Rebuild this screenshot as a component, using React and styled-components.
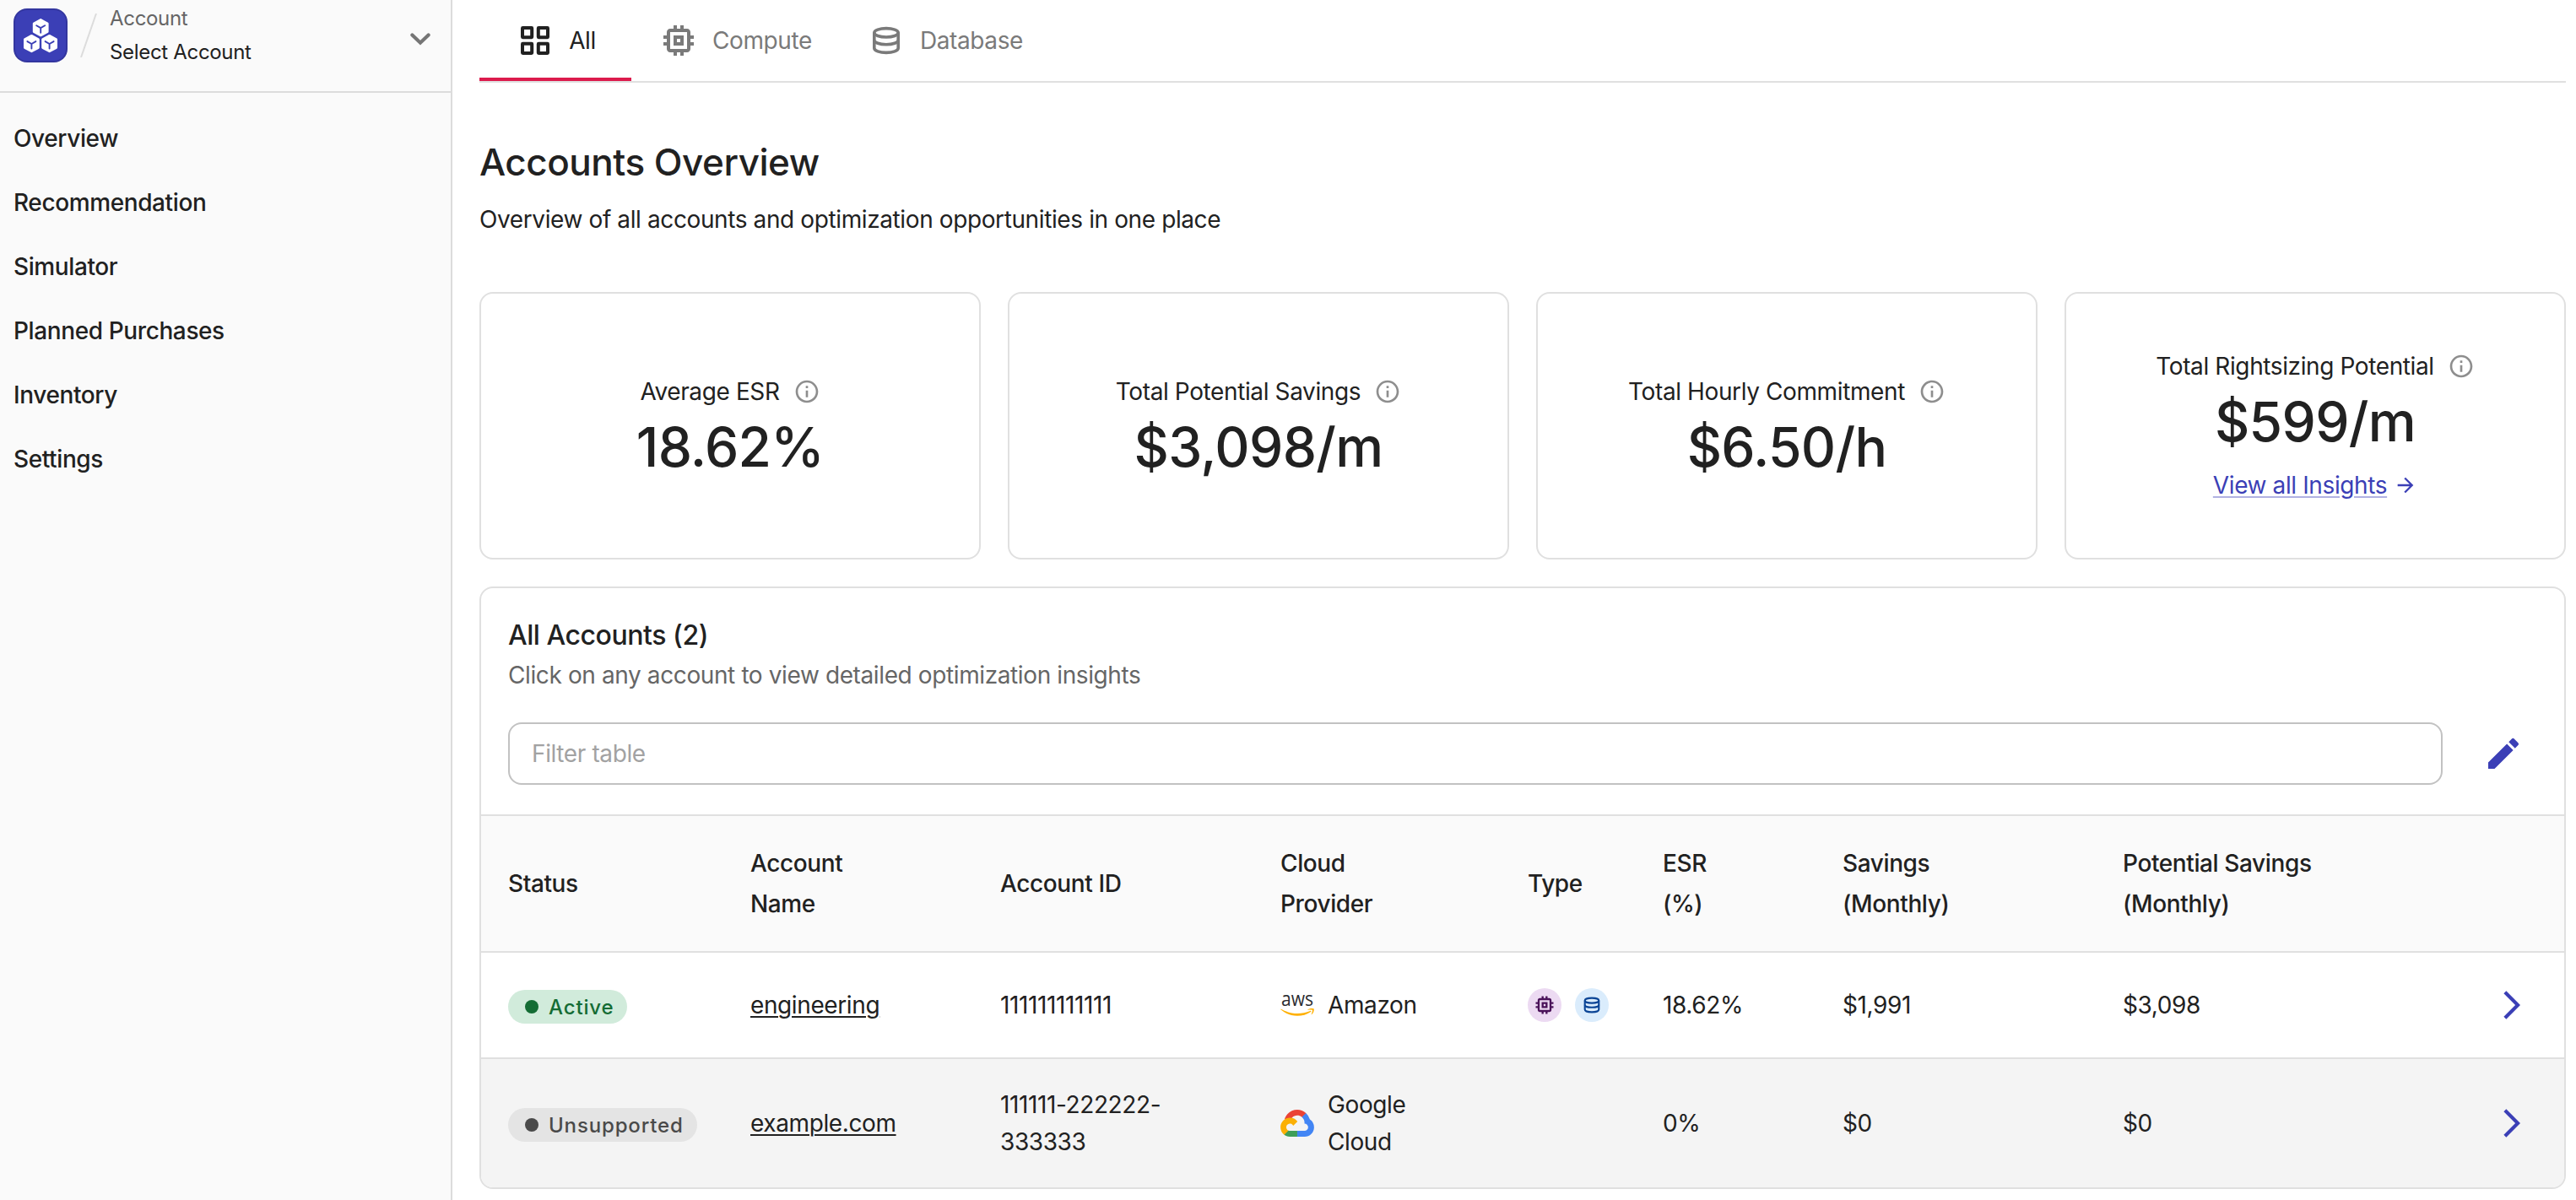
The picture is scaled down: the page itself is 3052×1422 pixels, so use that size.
import React from "react";
import styled, { createGlobalStyle } from "styled-components";

const navItems = [
  "Overview",
  "Recommendation",
  "Simulator",
  "Planned Purchases",
  "Inventory",
  "Settings",
];

const stats = [
  { label: "Average ESR", value: "18.62%" },
  { label: "Total Potential Savings", value: "$3,098/m" },
  { label: "Total Hourly Commitment", value: "$6.50/h" },
  { label: "Total Rightsizing Potential", value: "$599/m", link: "View all Insights" },
];

const headers = [
  "Status",
  "Account\nName",
  "Account ID",
  "Cloud\nProvider",
  "Type",
  "ESR\n(%)",
  "Savings\n(Monthly)",
  "Potential Savings\n(Monthly)",
];

const accounts = [
  {
    status: "Active",
    name: "engineering",
    id: "111111111111",
    provider: "Amazon",
    types: ["compute", "database"],
    esr: "18.62%",
    savings: "$1,991",
    potential: "$3,098",
  },
  {
    status: "Unsupported",
    name: "example.com",
    id: "111111-222222-\n333333",
    provider: "Google\nCloud",
    types: [],
    esr: "0%",
    savings: "$0",
    potential: "$0",
  },
];

const Icon = ({ size = 48, children }) => (
  <IconSvg $size={size} viewBox="0 0 24 24">
    {children}
  </IconSvg>
);

const GridIcon = ({ size }) => (
  <Icon size={size}>
    <g fill="none" stroke="currentColor" strokeWidth="2" strokeLinejoin="round">
      <rect x="4.5" y="4.5" width="5.6" height="5.6" rx="0.2" />
      <rect x="13.9" y="4.5" width="5.6" height="5.6" rx="0.2" />
      <rect x="4.5" y="13.9" width="5.6" height="5.6" rx="0.2" />
      <rect x="13.9" y="13.9" width="5.6" height="5.6" rx="0.2" />
    </g>
  </Icon>
);

const ComputeIcon = ({ size }) => (
  <Icon size={size}>
    <path d="M15 9H9v6h6V9zm-2 4h-2v-2h2v2zm8-2V9h-2V7c0-1.1-.9-2-2-2h-2V3h-2v2h-2V3H9v2H7c-1.1 0-2 .9-2 2v2H3v2h2v2H3v2h2v2c0 1.1.9 2 2 2h2v2h2v-2h2v2h2v-2h2c1.1 0 2-.9 2-2v-2h2v-2h-2v-2h2zm-4 6H7V7h10v10z" />
  </Icon>
);

const DatabaseIcon = ({ size }) => (
  <Icon size={size}>
    <g fill="none" stroke="currentColor" strokeWidth="1.8">
      <ellipse cx="12" cy="7.4" rx="7.1" ry="2.6" />
      <path d="M4.9 7.4v9.1c0 1.6 3.2 2.7 7.1 2.7s7.1-1.1 7.1-2.7V7.4" />
      <path d="M4.9 11.7c0 1.6 3.2 2.7 7.1 2.7s7.1-1.1 7.1-2.7" />
    </g>
  </Icon>
);

const InfoIcon = () => (
  <Icon size={32}>
    <path d="M11 7h2v2h-2zm0 4h2v6h-2zm1-9C6.48 2 2 6.48 2 12s4.48 10 10 10 10-4.48 10-10S17.52 2 12 2zm0 18c-4.41 0-8-3.59-8-8s3.59-8 8-8 8 3.59 8 8-3.59 8-8 8z" />
  </Icon>
);

const cubes = [
  [32.2, 22.6],
  [21.4, 41.5],
  [42.6, 41.5],
];

const Logo = () => (
  <LogoSvg viewBox="0 0 64 64">
    <rect width="64" height="64" rx="16" fill="#33369f" />
    <rect x="2" y="2" width="60" height="60" rx="14" fill="#3b3fb6" />
    {cubes.map(([x, y]) => (
      <g key={x} transform={`translate(${x} ${y})`}>
        <path
          d="M0-9.4 8.2-4.9V5.1L0 9.5-8.2 5.1V-4.9z"
          fill="#fff"
          stroke="#fff"
          strokeWidth="2.4"
          strokeLinejoin="round"
        />
        <path
          d="M-5-2.4 0 .5l5-2.9M0 .5v5.6"
          fill="none"
          stroke="#3b3fb6"
          strokeWidth="1.9"
          strokeLinecap="round"
        />
      </g>
    ))}
  </LogoSvg>
);

const AwsLogo = () => (
  <ProviderLogo width="40" height="50" viewBox="0 -12 40 50">
    <AwsText x="1" y="14" textLength="38" lengthAdjust="spacingAndGlyphs">
      aws
    </AwsText>
    <g transform="translate(0 2) scale(0.1317)" fill="#ffb000">
      <path d="M273.5 143.7c-32.9 24.3-80.7 37.2-121.8 37.2-57.6 0-109.5-21.3-148.7-56.7-3.1-2.8-.3-6.6 3.4-4.4 42.4 24.6 94.7 39.5 148.8 39.5 36.5 0 76.6-7.6 113.5-23.2 5.5-2.5 10.2 3.6 4.8 7.6z" />
      <path d="M287.2 128.1c-4.2-5.4-27.8-2.6-38.5-1.3-3.2.4-3.7-2.4-.8-4.5 18.8-13.2 49.7-9.4 53.3-5 3.6 4.5-1 35.4-18.6 50.2-2.7 2.3-5.3 1.1-4.1-1.9 4-9.9 12.9-32.2 8.7-37.5z" />
    </g>
  </ProviderLogo>
);

const GoogleLogo = () => (
  <ProviderLogo width="40" height="32" viewBox="0 0 256 206">
    <path
      fill="#ea4335"
      d="M170.252 56.819l22.253-22.253 1.483-9.37C153.437-11.677 88.976-7.496 52.42 33.92 42.267 45.423 34.734 59.764 30.717 74.573l7.97-1.123 44.505-7.34 3.436-3.513c19.797-21.742 53.27-24.667 76.128-6.168l7.496.39z"
    />
    <path
      fill="#4285f4"
      d="M224.205 73.918a100.249 100.249 0 0 0-30.217-48.722l-31.232 31.232a55.515 55.515 0 0 1 20.379 44.037v5.544c15.35 0 27.797 12.445 27.797 27.796 0 15.352-12.446 27.573-27.797 27.573h-55.671l-5.466 5.934v33.34l5.466 5.231h55.67c39.93.311 72.553-31.494 72.864-71.424a72.303 72.303 0 0 0-31.793-60.541"
    />
    <path
      fill="#3f9e58"
      d="M71.87 205.796h55.593V161.29H71.87a27.275 27.275 0 0 1-11.498-2.497l-7.887 2.42-22.409 22.253-1.952 7.574a72.3 72.3 0 0 0 43.746 14.756"
    />
    <path
      fill="#fbb005"
      d="M71.87 61.425C31.94 61.663-.236 94.227.001 134.157a72.3 72.3 0 0 0 28.122 56.97l32.247-32.246c-13.99-6.322-20.208-22.786-13.887-36.776 6.32-13.99 22.786-20.208 36.775-13.888a27.796 27.796 0 0 1 13.887 13.888l32.248-32.248A72.224 72.224 0 0 0 71.87 61.425"
    />
  </ProviderLogo>
);

const Sidebar = () => (
  <SidebarStyled>
    <AccountSelect>
      <Logo />
      <Slash viewBox="0 0 20 52">
        <path d="M19 0 1 52" stroke="#dcdcdc" strokeWidth="2" />
      </Slash>
      <AccountText>
        <AccountLabel>Account</AccountLabel>
        <AccountName>Select Account</AccountName>
      </AccountText>
      <SelectArrow>
        <Icon>
          <path
            d="M7.2 9.7 12 14.35l4.8-4.65"
            fill="none"
            stroke="currentColor"
            strokeWidth="2.1"
            strokeLinecap="round"
          />
        </Icon>
      </SelectArrow>
    </AccountSelect>
    <Nav>
      {navItems.map((item) => (
        <NavItem key={item}>{item}</NavItem>
      ))}
    </Nav>
  </SidebarStyled>
);

const StatCard = ({ label, value, link }) => (
  <Card>
    <CardLabel>
      {label}
      <InfoIcon />
    </CardLabel>
    <CardValue>{value}</CardValue>
    {link && (
      <CardLink>
        <span>{link}</span>
        <Icon size={28}>
          <path d="m12 4-1.41 1.41L16.17 11H4v2h12.17l-5.58 5.59L12 20l8-8z" />
        </Icon>
      </CardLink>
    )}
  </Card>
);

const AccountRow = ({ account }) => {
  const active = account.status === "Active";
  return (
    <Row $muted={!active}>
      <div>
        <Badge $active={active}>
          <BadgeDot />
          {account.status}
        </Badge>
      </div>
      <NameLink>{account.name}</NameLink>
      <Cell>{account.id}</Cell>
      <Provider>
        {active ? <AwsLogo /> : <GoogleLogo />}
        <Cell>{account.provider}</Cell>
      </Provider>
      <Types>
        {account.types.map((type) => (
          <TypeCircle key={type} $type={type}>
            {type === "compute" ? <ComputeIcon size={28} /> : <DatabaseIcon size={28} />}
          </TypeCircle>
        ))}
      </Types>
      <Cell>{account.esr}</Cell>
      <Cell>{account.savings}</Cell>
      <Cell>{account.potential}</Cell>
      <RowArrow>
        <Icon size={40}>
          <path d="M6.23 20.23 8 22l10-10L8 2 6.23 3.77 14.46 12z" />
        </Icon>
      </RowArrow>
    </Row>
  );
};

const App = () => {
  return (
    <Page>
      <GlobalStyle />
      <Sidebar />
      <Main>
        <Tabs>
          <Tab $active>
            <GridIcon />
            All
          </Tab>
          <Tab>
            <ComputeIcon />
            Compute
          </Tab>
          <Tab>
            <DatabaseIcon />
            Database
          </Tab>
        </Tabs>
        <Title>Accounts Overview</Title>
        <Subtitle>
          Overview of all accounts and optimization opportunities in one place
        </Subtitle>
        <Cards>
          {stats.map((stat) => (
            <StatCard key={stat.label} {...stat} />
          ))}
        </Cards>
        <Panel>
          <PanelHead>
            <PanelTitle>All Accounts (2)</PanelTitle>
            <PanelSubtitle>
              Click on any account to view detailed optimization insights
            </PanelSubtitle>
            <FilterBar>
              <FilterInput placeholder="Filter table" />
              <EditButton>
                <Icon>
                  <path d="M3 17.25V21h3.75L17.81 9.94l-3.75-3.75L3 17.25zM20.71 7.04c.39-.39.39-1.02 0-1.41l-2.34-2.34a.9959.9959 0 0 0-1.41 0l-1.83 1.83 3.75 3.75 1.83-1.83z" />
                </Icon>
              </EditButton>
            </FilterBar>
          </PanelHead>
          <HeaderRow>
            {headers.map((header) => (
              <HeaderCell key={header}>{header}</HeaderCell>
            ))}
          </HeaderRow>
          {accounts.map((account) => (
            <AccountRow key={account.name} account={account} />
          ))}
        </Panel>
      </Main>
    </Page>
  );
};

export default App;

const GlobalStyle = createGlobalStyle`
  * {
    box-sizing: border-box;
  }

  body {
    margin: 0;
    background-color: #fff;
    color: #212121;
    font-family: Inter, sans-serif;
    font-size: 28px;
    letter-spacing: -0.39px;
  }
`;

const IconSvg = styled.svg`
  display: block;
  flex: none;
  width: ${(props) => props.$size}px;
  height: ${(props) => props.$size}px;
  fill: currentColor;
`;

const Page = styled.div`
  display: flex;
  height: 1422px;
  overflow: hidden;
`;

const SidebarStyled = styled.aside`
  flex: none;
  width: 536px;
  background-color: #fafafa;
  border-right: 2px solid #dcdcdc;
`;

const AccountSelect = styled.div`
  display: flex;
  align-items: flex-start;
  height: 110px;
  padding: 10px 12px 0 16px;
  border-bottom: 2px solid #dcdcdc;
`;

const LogoSvg = styled.svg`
  flex: none;
  width: 64px;
  height: 64px;
`;

const Slash = styled.svg`
  flex: none;
  width: 20px;
  height: 52px;
  margin: 6px 0 0 15px;
`;

const AccountText = styled.div`
  display: flex;
  flex-direction: column;
  margin: -8px 0 0 15px;
  font-size: 24px;
  line-height: 40px;
  letter-spacing: -0.32px;
`;

const AccountLabel = styled.span`
  color: #666;
`;

const AccountName = styled.span`
  color: #212121;
`;

const SelectArrow = styled.div`
  margin: 12px 0 0 auto;
  color: #757575;
`;

const Nav = styled.nav`
  display: flex;
  flex-direction: column;
  padding: 16px;
`;

const NavItem = styled.a`
  font-weight: 500;
  line-height: 76px;
`;

const Main = styled.main`
  flex: 1;
  padding: 0 12px 0 32px;
`;

const Tabs = styled.div`
  display: flex;
  height: 98px;
  border-bottom: 2px solid #e0e0e0;
`;

const Tab = styled.div`
  display: flex;
  align-items: center;
  justify-content: center;
  gap: 16px;
  min-width: 180px;
  padding: 4px 32px 0;
  border-bottom: 4px solid ${(props) => (props.$active ? "#dc1a4c" : "transparent")};
  color: ${(props) => (props.$active ? "#212121" : "#7a7a7a")};
`;

const Title = styled.h1`
  margin: 64px 0 0;
  font-size: 44px;
  font-weight: 500;
  line-height: 60px;
  letter-spacing: -0.48px;
`;

const Subtitle = styled.p`
  margin: 18px 0 0;
  line-height: 40px;
`;

const Cards = styled.div`
  display: grid;
  grid-template-columns: repeat(4, 1fr);
  gap: 32px;
  margin-top: 66px;
`;

const Card = styled.div`
  display: flex;
  flex-direction: column;
  align-items: center;
  justify-content: center;
  height: 317px;
  border: 2px solid #e0e0e0;
  border-radius: 16px;
`;

const CardLabel = styled.div`
  display: flex;
  align-items: center;
  gap: 16px;
  height: 46px;

  svg {
    color: #8e8e8e;
  }
`;

const CardValue = styled.div`
  margin-top: 4px;
  font-size: 64px;
  font-weight: 500;
  line-height: 77px;
  letter-spacing: -0.65px;
`;

const CardLink = styled.a`
  display: flex;
  align-items: center;
  gap: 8px;
  height: 47px;
  margin-top: 13px;
  color: #3b3fb6;

  span {
    text-decoration: underline;
    text-decoration-color: #b1b2e2;
    text-decoration-thickness: 2px;
    text-underline-offset: 3px;
  }
`;

const Panel = styled.section`
  height: 714px;
  margin-top: 32px;
  border: 2px solid #e0e0e0;
  border-radius: 16px;
  overflow: hidden;
`;

const PanelHead = styled.div`
  height: 268px;
  padding: 36px 48px 0 32px;
`;

const PanelTitle = styled.h2`
  margin: 0;
  font-size: 32px;
  font-weight: 500;
  line-height: 40px;
  letter-spacing: -0.45px;
`;

const PanelSubtitle = styled.p`
  margin: 6px 0 0;
  line-height: 42px;
  color: #666;
`;

const FilterBar = styled.div`
  display: flex;
  align-items: center;
  gap: 48px;
  margin-top: 35px;
`;

const FilterInput = styled.input`
  flex: 1;
  height: 74px;
  padding: 0 26px;
  border: 2px solid #c2c2c2;
  border-radius: 16px;
  outline: none;
  background-color: #fff;
  font: inherit;
  letter-spacing: inherit;

  &::placeholder {
    color: #a2a2a2;
  }
`;

const EditButton = styled.div`
  color: #3b3fb6;
`;

const Row = styled.div`
  display: grid;
  grid-template-columns: 287px 296px 332px 293px 160px 213px 332px 441px 1fr;
  align-items: center;
  height: ${(props) => (props.$muted ? 154 : 126)}px;
  padding-left: 32px;
  border-top: 2px solid #e0e0e0;
  background-color: ${(props) => (props.$muted ? "#f4f4f4" : "#fff")};
`;

const HeaderRow = styled(Row)`
  height: 162px;
  background-color: #fafafa;
`;

const HeaderCell = styled.div`
  font-weight: 500;
  line-height: 48px;
  white-space: pre-line;
`;

const Cell = styled.div`
  line-height: 44px;
  white-space: pre-line;
`;

const NameLink = styled.a`
  text-decoration: underline;
  text-decoration-thickness: 2px;
  text-underline-offset: 3px;
`;

const Badge = styled.span`
  display: inline-flex;
  align-items: center;
  height: 40px;
  margin-top: 4px;
  padding: 0 16px 0 20px;
  border-radius: 20px;
  background-color: ${(props) => (props.$active ? "#d1ebdb" : "#e4e4e4")};
  color: ${(props) => (props.$active ? "#146c34" : "#4a4a4a")};
  font-size: 24px;
  font-weight: 500;
  letter-spacing: 0.85px;
`;

const BadgeDot = styled.i`
  width: 16px;
  height: 16px;
  margin-right: 12px;
  border-radius: 50%;
  background-color: currentColor;
`;

const Provider = styled.div`
  display: flex;
  align-items: center;
  gap: 16px;
`;

const ProviderLogo = styled.svg`
  display: block;
  flex: none;
`;

const AwsText = styled.text`
  fill: #2a2c30;
  font-family: "Open Sans", sans-serif;
  font-size: 24px;
  letter-spacing: 0;
`;

const Types = styled.div`
  display: flex;
  gap: 16px;
`;

const TypeCircle = styled.span`
  display: flex;
  align-items: center;
  justify-content: center;
  width: 40px;
  height: 40px;
  border-radius: 50%;
  background-color: ${(props) => (props.$type === "compute" ? "#ecdaf2" : "#daecfc")};
  color: ${(props) => (props.$type === "compute" ? "#4a1259" : "#0b4596")};
`;

const RowArrow = styled.div`
  color: #3b3fb6;
`;
